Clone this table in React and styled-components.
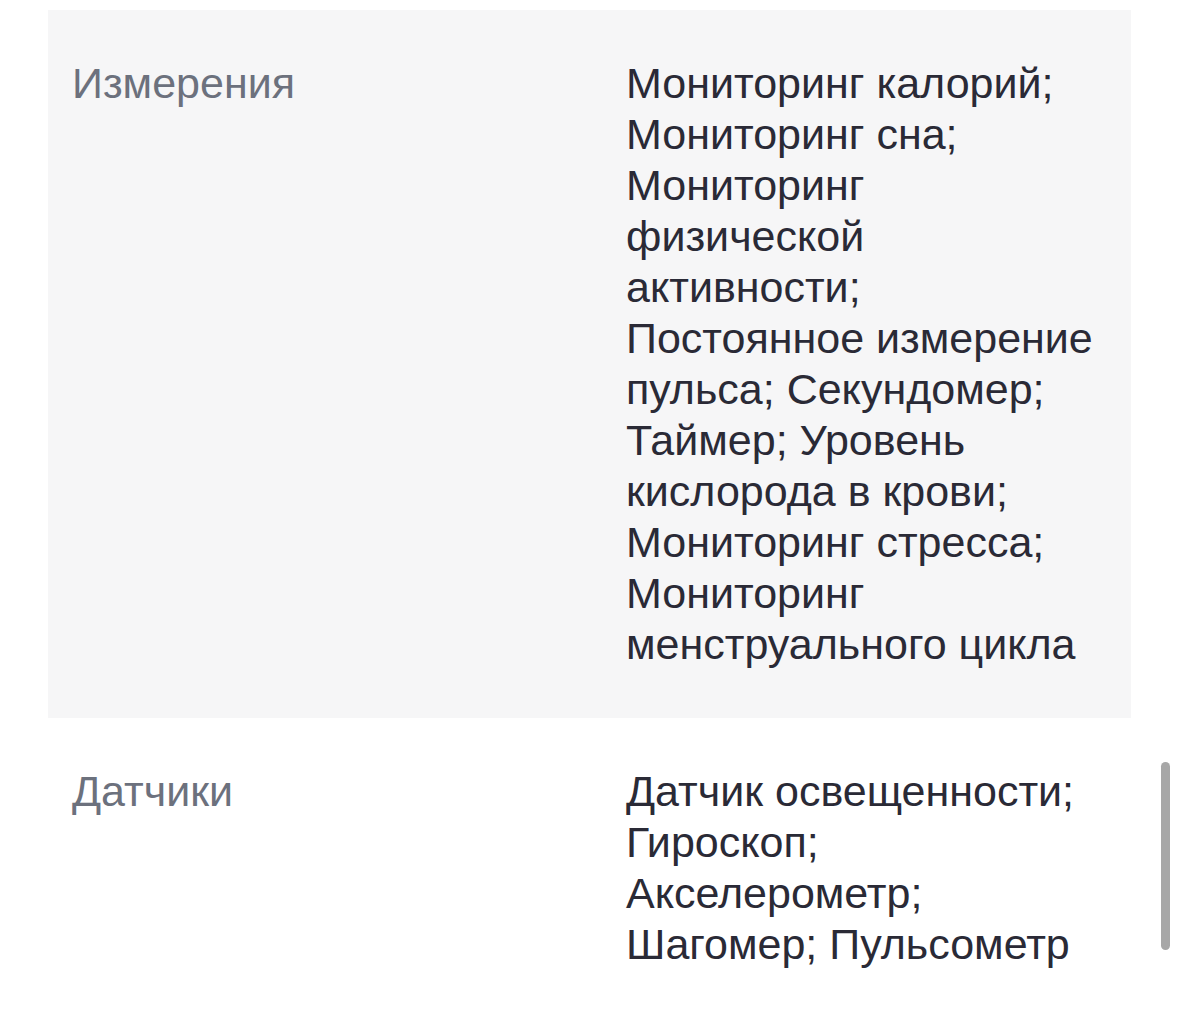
import React from "react";
import styled, { createGlobalStyle } from "styled-components";

const GlobalStyle = createGlobalStyle`
    html, body {
        margin: 0;
        padding: 0;
        background-color: #ffffff;
    }
    body {
        font-family: "Liberation Sans", Arial, sans-serif;
    }
`

const Page = styled.div`
    position: relative;
    width: 1179px;
    height: 1031px;
    padding: 10px 48px 0 48px;
    box-sizing: border-box;
    overflow: hidden;
`

const SpecRow = styled.div`
    display: grid;
    grid-template-columns: 554px 1fr;
    padding: 48px 24px 48px 24px;
    background-color: ${(p) => (p.$shaded ? "#f6f6f7" : "transparent")};
`

const SpecName = styled.div`
    font-size: 43px;
    line-height: 51px;
    color: #6c717d;
`

const SpecValue = styled.div`
    font-size: 43px;
    line-height: 51px;
    color: #2a2a36;
`

const ScrollThumb = styled.div`
    position: absolute;
    left: 1161px;
    top: 762px;
    width: 9px;
    height: 188px;
    border-radius: 5px;
    background-color: #a7a7a7;
`

const specs = [
    {
        name: "Измерения",
        value: "Мониторинг калорий; Мониторинг сна; Мониторинг физической активности; Постоянное измерение пульса; Секундомер; Таймер; Уровень кислорода в крови; Мониторинг стресса; Мониторинг менструального цикла",
    },
    {
        name: "Датчики",
        value: "Датчик освещенности; Гироскоп; Акселерометр; Шагомер; Пульсометр",
    },
];

const App = () => {
    return (
        <Page>
            <GlobalStyle />
            {specs.map((spec, i) => (
                <SpecRow key={spec.name} $shaded={i % 2 === 0}>
                    <SpecName>{spec.name}</SpecName>
                    <SpecValue>{spec.value}</SpecValue>
                </SpecRow>
            ))}
            <ScrollThumb />
        </Page>
    )
};

export default App;
